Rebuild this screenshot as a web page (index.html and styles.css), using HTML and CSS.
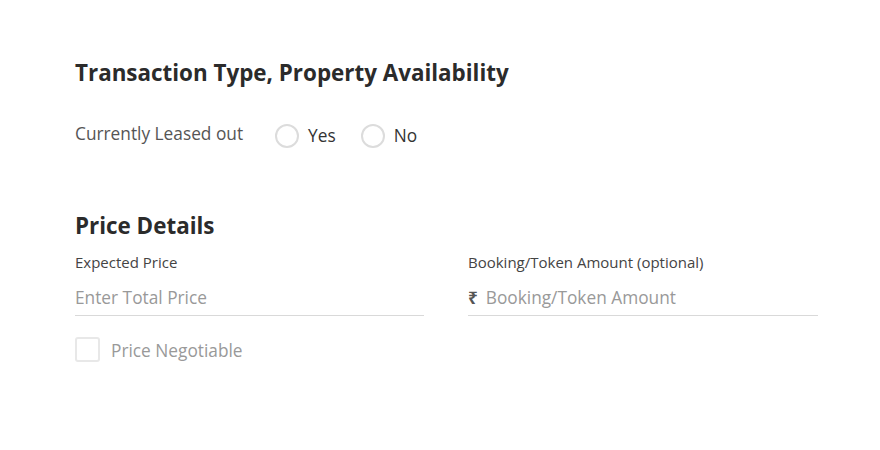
FILE: index.html
```html
<!DOCTYPE html>
<html>
<head>
<meta charset="utf-8">
<link rel="stylesheet" href="styles.css">
</head>
<body>
<div class="page">
  <h2 class="section-title">Transaction Type, Property Availability</h2>
  <div class="leased-row">
    <span class="row-label">Currently Leased out</span>
    <label class="radio"><span class="radio-circle"></span><span class="radio-text">Yes</span></label>
    <label class="radio"><span class="radio-circle"></span><span class="radio-text">No</span></label>
  </div>

  <h2 class="section-title price-title">Price Details</h2>
  <div class="price-grid">
    <div class="field">
      <div class="field-label">Expected Price</div>
      <div class="field-input"><span class="placeholder">Enter Total Price</span></div>
    </div>
    <div class="field">
      <div class="field-label">Booking/Token Amount (optional)</div>
      <div class="field-input"><span class="rupee">₹</span><span class="placeholder">Booking/Token Amount</span></div>
    </div>
  </div>
  <label class="checkbox"><span class="checkbox-box"></span><span class="checkbox-text">Price Negotiable</span></label>
</div>
</body>
</html>
```
FILE: styles.css
```css
html, body {
  margin: 0;
  padding: 0;
  background: #fff;
}
body {
  font-family: "Open Sans", "Noto Sans", sans-serif;
  color: #333;
}
.page {
  padding: 59px 62px 0 75px;
  width: 743px;
}
.section-title {
  margin: 0;
  font-size: 22.4px;
  line-height: 28px;
  font-weight: 700;
  color: #2b2b2b;
}
.leased-row {
  display: flex;
  align-items: flex-start;
  margin-top: 35px;
}
.row-label {
  font-size: 17.3px;
  line-height: 24px;
  color: #555;
  margin-right: 32px;
}
.radio {
  display: flex;
  align-items: center;
  margin-right: 25px;
  margin-top: 2px;
}
.radio-circle {
  width: 20px;
  height: 20px;
  border: 2px solid #dcdcdc;
  border-radius: 50%;
  margin-right: 9px;
}
.radio-text {
  font-size: 17.3px;
  line-height: 24px;
  color: #333;
}
.price-title {
  margin-top: 64px;
}
.price-grid {
  display: grid;
  grid-template-columns: 349px 350px;
  column-gap: 44px;
  margin-top: 12px;
}
.field-label {
  font-size: 15px;
  line-height: 20px;
  color: #444;
}
.field-input {
  margin-top: 8px;
  height: 35px;
  border-bottom: 1px solid #d9d9d9;
  display: flex;
  align-items: center;
}
.placeholder {
  font-size: 17.3px;
  color: #999;
}
.rupee {
  font-size: 17px;
  font-weight: 700;
  color: #555;
  margin-right: 8px;
}
.checkbox {
  display: flex;
  align-items: flex-start;
  margin-top: 21px;
}
.checkbox-box {
  width: 21px;
  height: 21px;
  border: 2px solid #e8e8e8;
  border-radius: 3px;
  margin-right: 11px;
}
.checkbox-text {
  font-size: 17.3px;
  line-height: 24px;
  margin-top: 2px;
  color: #999;
}
```
